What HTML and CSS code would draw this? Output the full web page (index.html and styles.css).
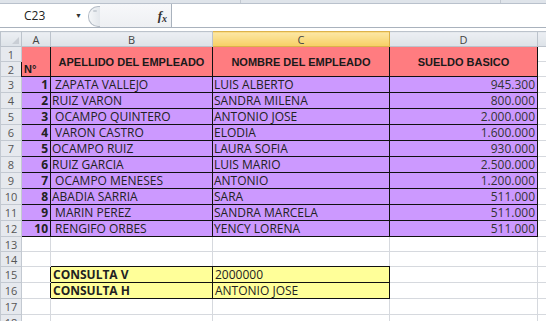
FILE: index.html
```html
<!DOCTYPE html>
<html lang="es">
<head>
    <meta charset="UTF-8">
    <title>Empleados</title>
    <link rel="stylesheet" href="styles.css">
</head>
<body>
    <div class="ribbon-edge">
        <span class="rib-div rib-div-1"></span>
        <span class="rib-div rib-div-2"></span>
    </div>
    <div class="formula-bar">
        <div class="name-box">
            <span class="cell-ref">C23</span>
            <span class="drop">&#9660;</span>
        </div>
        <div class="grip"><span class="grip-dot"></span></div>
        <div class="fx-btn"><i>f</i><i class="x">x</i></div>
        <div class="formula-input"></div>
    </div>
    <table class="sheet">
        <colgroup>
            <col class="c-rh">
            <col class="c-a">
            <col class="c-b">
            <col class="c-c">
            <col class="c-d">
            <col class="c-e">
        </colgroup>
        <tr class="col-heads">
            <th class="corner"><span class="corner-tri"></span></th>
            <th>A</th>
            <th>B</th>
            <th class="sel">C</th>
            <th>D</th>
            <th></th>
        </tr>
        <tr class="r-head">
            <th class="rh">1</th>
            <td class="hd num-hd" rowspan="2">N&#176;</td>
            <td class="hd" rowspan="2">APELLIDO DEL EMPLEADO</td>
            <td class="hd" rowspan="2">NOMBRE DEL EMPLEADO</td>
            <td class="hd" rowspan="2">SUELDO BASICO</td>
            <td></td>
        </tr>
        <tr class="r-head">
            <th class="rh">2</th>
            <td></td>
        </tr>
        <tr><th class="rh">3</th><td class="dt n">1</td><td class="dt">&nbsp;ZAPATA VALLEJO</td><td class="dt">LUIS ALBERTO</td><td class="dt v">945.300</td><td></td></tr>
        <tr><th class="rh">4</th><td class="dt n">2</td><td class="dt">RUIZ VARON</td><td class="dt">SANDRA MILENA</td><td class="dt v">800.000</td><td></td></tr>
        <tr><th class="rh">5</th><td class="dt n">3</td><td class="dt">&nbsp;OCAMPO QUINTERO</td><td class="dt">ANTONIO JOSE</td><td class="dt v">2.000.000</td><td></td></tr>
        <tr><th class="rh">6</th><td class="dt n">4</td><td class="dt">&nbsp;VARON CASTRO</td><td class="dt">ELODIA</td><td class="dt v">1.600.000</td><td></td></tr>
        <tr><th class="rh">7</th><td class="dt n">5</td><td class="dt">OCAMPO RUIZ</td><td class="dt">LAURA SOFIA</td><td class="dt v">930.000</td><td></td></tr>
        <tr><th class="rh">8</th><td class="dt n">6</td><td class="dt">RUIZ GARCIA</td><td class="dt">LUIS MARIO</td><td class="dt v">2.500.000</td><td></td></tr>
        <tr><th class="rh">9</th><td class="dt n">7</td><td class="dt">&nbsp;OCAMPO MENESES</td><td class="dt">ANTONIO</td><td class="dt v">1.200.000</td><td></td></tr>
        <tr><th class="rh">10</th><td class="dt n">8</td><td class="dt">ABADIA SARRIA</td><td class="dt">SARA</td><td class="dt v">511.000</td><td></td></tr>
        <tr><th class="rh">11</th><td class="dt n">9</td><td class="dt">&nbsp;MARIN PEREZ</td><td class="dt">SANDRA MARCELA</td><td class="dt v">511.000</td><td></td></tr>
        <tr><th class="rh">12</th><td class="dt n">10</td><td class="dt">&nbsp;RENGIFO ORBES</td><td class="dt">YENCY LORENA</td><td class="dt v">511.000</td><td></td></tr>
        <tr class="short"><th class="rh">13</th><td></td><td></td><td></td><td></td><td></td></tr>
        <tr class="short"><th class="rh">14</th><td></td><td class="edge-b"></td><td class="edge-b"></td><td></td><td></td></tr>
        <tr><th class="rh">15</th><td class="edge-r"></td><td class="q q-label">CONSULTA V</td><td class="q">2000000</td><td></td><td></td></tr>
        <tr><th class="rh">16</th><td class="edge-r"></td><td class="q q-label">CONSULTA H</td><td class="q">ANTONIO JOSE</td><td></td><td></td></tr>
        <tr><th class="rh">17</th><td></td><td></td><td></td><td></td><td></td></tr>
        <tr><th class="rh">18</th><td></td><td></td><td></td><td></td><td></td></tr>
    </table>
</body>
</html>
```
FILE: styles.css
```css
body {
    margin: 0;
    padding: 0;
    background: #ffffff;
    font-family: "Open Sans", "Liberation Sans", sans-serif;
    overflow: hidden;
}

.ribbon-edge {
    position: relative;
    height: 3px;
    background: #dfe4ea;
    border-bottom: 1px solid #b9c1cc;
}
.rib-div {
    position: absolute;
    top: 0;
    width: 1px;
    height: 3px;
    background: #c3c9d1;
}
.rib-div-1 { left: 240px; }
.rib-div-2 { left: 500px; }

/* formula bar */
.formula-bar {
    display: flex;
    height: 23px;
    background: #ffffff;
    border-bottom: 1px solid #a9b2bd;
}
.name-box {
    width: 88px;
    display: flex;
    align-items: center;
    font-size: 12px;
    color: #222;
}
.cell-ref {
    padding-left: 24px;
    flex: 1;
}
.drop {
    font-size: 7px;
    color: #333;
    margin-right: 6px;
}
.grip {
    width: 11px;
    height: 19px;
    margin-top: 2px;
    border: 1px solid #b5bcc6;
    border-right: none;
    border-radius: 10px 0 0 10px;
    background: linear-gradient(to right, #f4f6f8, #e3e7ec);
    position: relative;
}
.grip-dot {
    position: absolute;
    left: 4px;
    top: 3px;
    width: 4px;
    height: 2px;
    border-radius: 2px;
    background: #c9cfd6;
}
.fx-btn {
    width: 71px;
    background: linear-gradient(#f7f8fa, #eef0f3);
    display: flex;
    justify-content: flex-end;
    align-items: center;
    padding-right: 4px;
    box-sizing: border-box;
    font-family: "Liberation Serif", serif;
    font-size: 13px;
    color: #333;
}
.fx-btn i { font-weight: bold; }
.fx-btn .x {
    font-size: 10px;
    margin-top: 5px;
}
.formula-input {
    flex: 1;
    border-left: 1px solid #a9b2bd;
    background: #fff;
}

/* grid */
.sheet {
    margin-top: 3px;
    border-collapse: collapse;
    table-layout: fixed;
    width: 546px;
    font-size: 12px;
    color: #222;
}
.c-rh { width: 21px; }
.c-a { width: 29px; }
.c-b { width: 162px; }
.c-c { width: 177px; }
.c-d { width: 148px; }
.c-e { width: 9px; }

.sheet td, .sheet th {
    padding: 0;
    height: 15px;
    border: 1px solid #d6d9de;
    white-space: nowrap;
    overflow: hidden;
}
.col-heads th {
    height: 14px;
    background: linear-gradient(#eceff3, #dde2e8);
    border-color: #bcc3cc;
    font-weight: normal;
    font-size: 11px;
    color: #444;
    line-height: 13px;
}
.col-heads th.sel {
    background: linear-gradient(#fce7a5, #f7cf63);
    border-color: #dcb24c;
}
.corner {
    position: relative;
}
.corner-tri {
    position: absolute;
    right: 2px;
    bottom: 2px;
    width: 0;
    height: 0;
    border-left: 7px solid transparent;
    border-bottom: 7px solid #c9ced5;
}
.sheet th.rh {
    background: #e6e9ee;
    border-color: #c3c9d1;
    font-weight: normal;
    font-size: 11px;
    line-height: 13px;
    color: #555;
    text-align: center;
}
.r-head th.rh, .r-head td { height: 14px; }
.short th.rh, .short td { height: 14px; }

.hd {
    background: #ff7c80;
    border: 1px solid #111 !important;
    font-family: "Liberation Sans", Arial, sans-serif;
    font-weight: bold;
    font-size: 11px;
    color: #1a1a1a;
    text-align: center;
    vertical-align: middle;
}
.hd.num-hd {
    text-align: left;
    vertical-align: bottom;
    padding: 0 0 1px 2px;
    font-size: 11px;
}

.dt {
    background: #cc99ff;
    border: 1px solid #111 !important;
    vertical-align: bottom;
    padding: 0 2px 0 1px !important;
    line-height: 15px;
}
.dt.n {
    text-align: right;
    font-weight: bold;
}
.dt.v {
    text-align: right;
    color: #333;
}

.edge-b { border-bottom-color: #111 !important; }
.edge-r { border-right-color: #111 !important; }

.q {
    background: #ffff99;
    border: 1px solid #111 !important;
    padding-left: 2px !important;
    vertical-align: bottom;
    line-height: 15px;
}
.q-label {
    font-weight: bold;
}
```
